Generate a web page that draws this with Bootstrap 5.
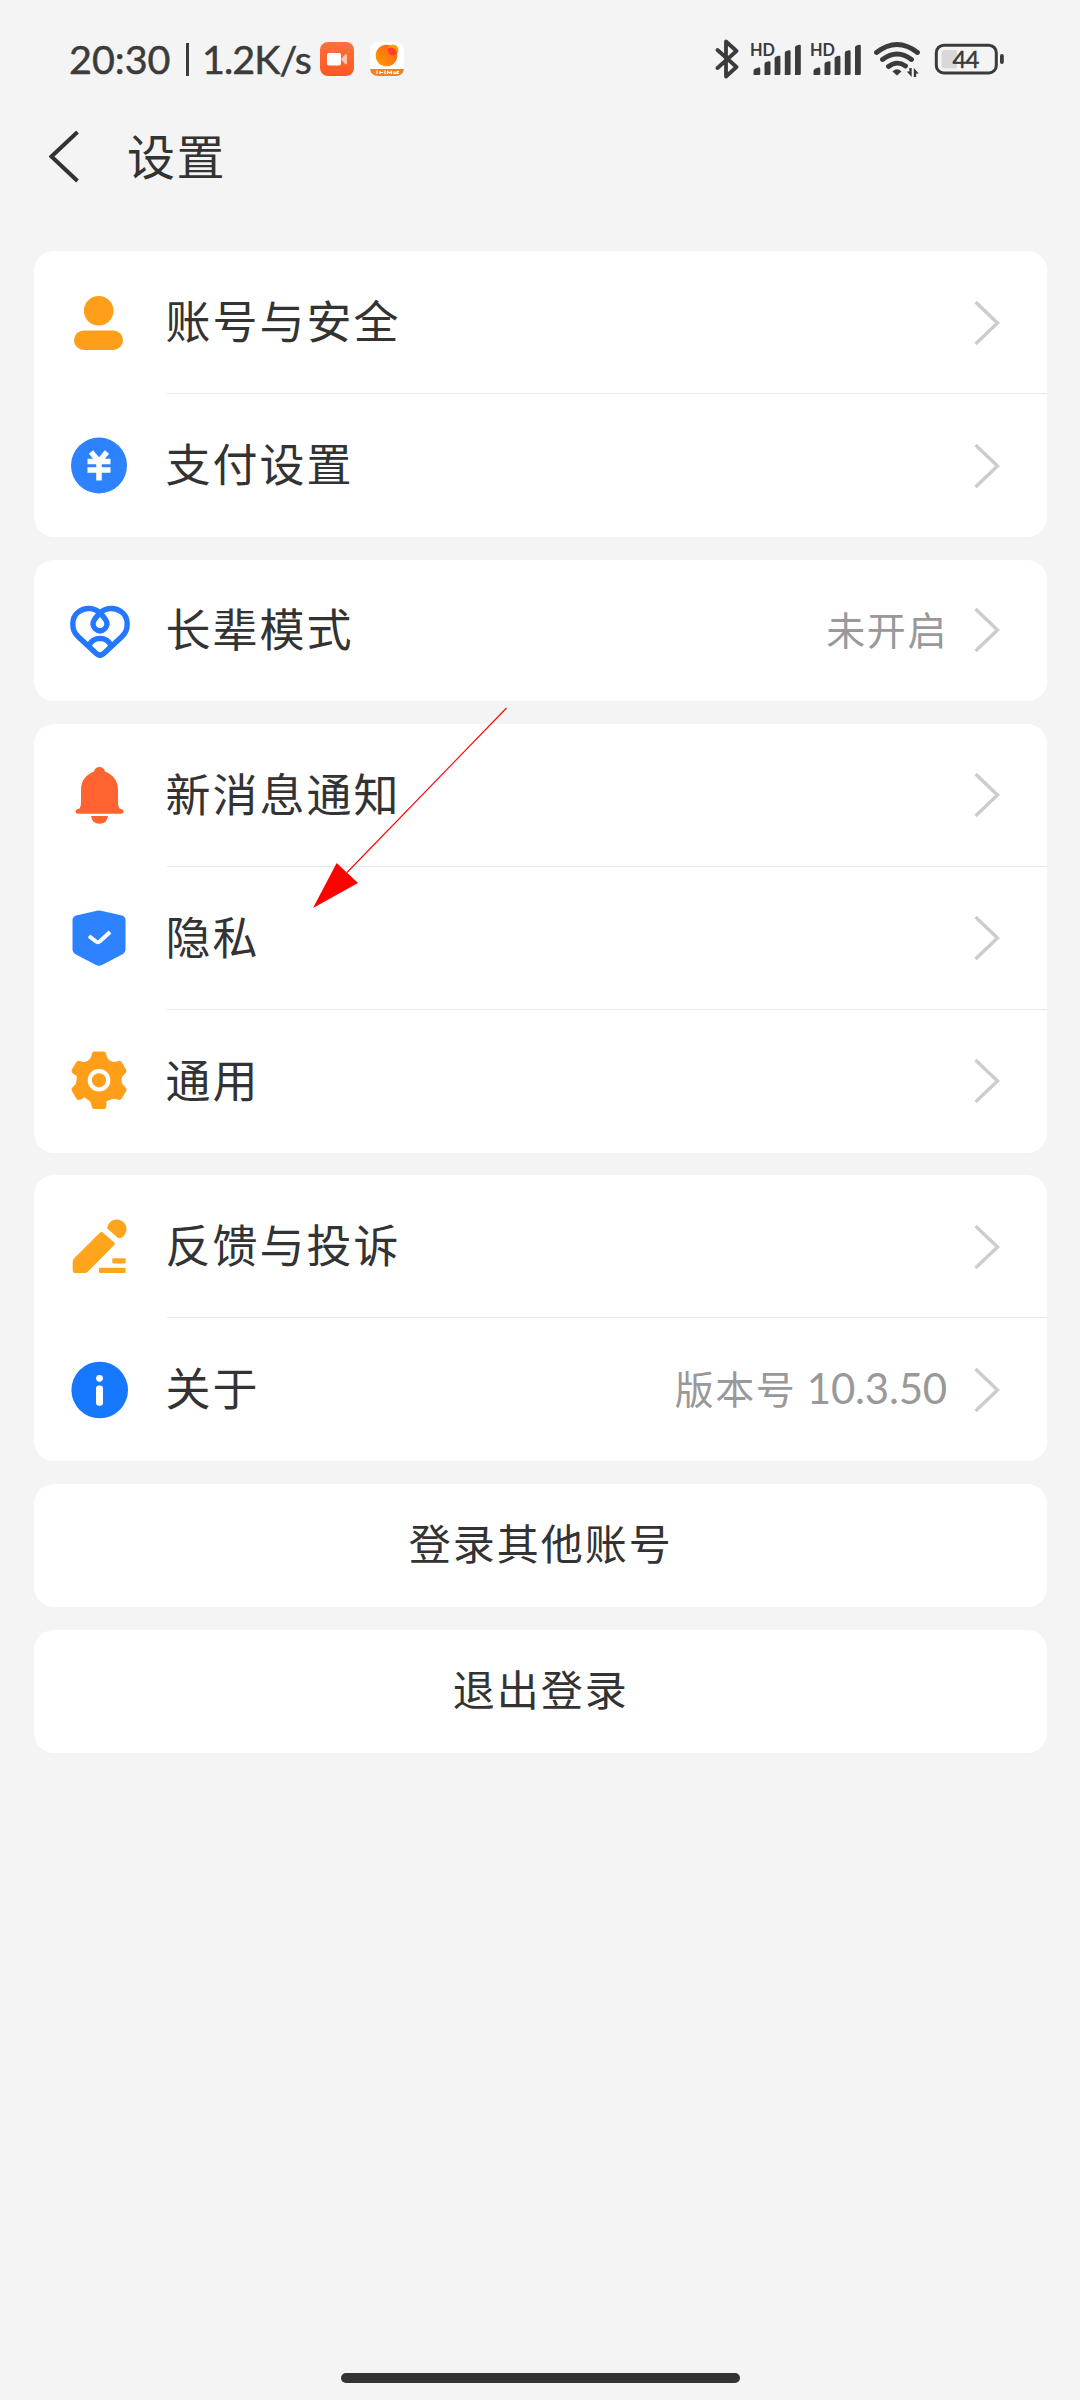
<!DOCTYPE html>
<html lang="zh-CN">
<head>
<meta charset="utf-8">
<meta name="viewport" content="width=device-width, initial-scale=1">
<title>设置</title>
<link href="https://cdn.jsdelivr.net/npm/bootstrap@5.3.0/dist/css/bootstrap.min.css" rel="stylesheet">
<style>
  body { background: #f4f4f4; color: #333; font-family: "Noto Sans CJK SC", sans-serif; }
  .screen { width: 1080px; height: 2400px; overflow: hidden; }
  .status { height: 118px; padding: 0 76px 0 69px; color: #3b3b3b; }
  .latin { font-family: Lato, sans-serif; }
  .status-text { font-size: 39.5px; line-height: 1; font-weight: 400; -webkit-text-stroke: .5px #3b3b3b; white-space: nowrap; }
  .clock { width: 101px; }
  .speed { width: 111px; letter-spacing: -1px; }
  .bar-sep { margin: 0 13px 0 15.5px; }
  .title-bar { height: 78px; padding-left: 49px; }
  .title-text { font-size: 48px; letter-spacing: 1.5px; line-height: 78px; margin-left: 48px; padding-bottom: 6px; }
  .groups { padding: 55px 33px 0 33.5px; gap: 22.6px; }
  .group { border: 0; border-radius: 20px; background: #fff; }
  .item { height: 143px; padding: 0 47px 0 35.5px; }
  .solo .item { height: 141.4px; }
  .item-icon { width: 60px; height: 60px; flex: none; }
  .item-label { font-size: 45px; letter-spacing: 2px; line-height: 60px; margin-left: 36.5px; padding-bottom: 5px; }
  .item-value { font-size: 39px; letter-spacing: 1.6px; line-height: 50px; color: #999; padding-bottom: 4px; }
  .item-value .latin { font-size: 42px; letter-spacing: -.2px; margin-right: 1px; }
  .chev { margin-left: 29px; flex: none; }
  .item-value + .chev { margin-left: 26px; }
  .divider { height: 1px; margin: -1px 0 0 133px; background: #e9e9e9; }
  .action { height: 123.4px; border: 0; border-radius: 20px; background: #fff; color: #333; font-size: 42px; letter-spacing: 2px; padding: 0 0 7px 1px; }
  .pointer { left: 300px; top: 700px; pointer-events: none; }
  .home-bar { width: 399px; height: 10px; border-radius: 5px; background: #333; margin-bottom: 17px; }
</style>
</head>
<body>
<div class="screen position-relative d-flex flex-column">

  <header class="status d-flex align-items-center justify-content-between">
    <div class="d-flex align-items-center">
      <span class="status-text clock latin">20:30</span>
      <svg class="bar-sep" width="3.6" height="33"><rect width="3.6" height="33" fill="#3b3b3b"/></svg>
      <span class="status-text speed latin">1.2K/s</span>
      <svg width="34" height="34" viewBox="0 0 34 34" style="margin-left:7px">
        <defs><linearGradient id="rec" x1="0" y1="0" x2="0" y2="1"><stop offset="0" stop-color="#ff713c"/><stop offset="1" stop-color="#ff5722"/></linearGradient></defs>
        <rect width="34" height="34" rx="8" fill="url(#rec)"/>
        <rect x="7" y="11" width="14" height="12.5" rx="2" fill="#fff"/>
        <path d="M21 17.2 25 12.5q2-1 2 1v7.500q0 2-2 1z" fill="#ffc8b2"/>
      </svg>
      <svg width="36" height="34" viewBox="0 0 36 34" style="margin-left:15px">
        <defs><linearGradient id="sun" x1="1" y1="0" x2="0" y2="1"><stop offset="0" stop-color="#ff5c1c"/><stop offset="1" stop-color="#ff9c00"/></linearGradient></defs>
        <rect x="1" width="34" height="34" rx="8" fill="#fff"/>
        <circle cx="17.500" cy="13.500" r="10.800" fill="url(#sun)"/>
        <circle cx="24" cy="8" r="5.500" fill="#ff9d0a"/>
        <path d="M18.600 7a5.500 5.500 0 0 1 9 5 10.800 10.800 0 0 1-3.500 1.400A5.500 5.500 0 0 1 18.600 7z" fill="#ff3d2e"/>
        <path d="M1 27h34q-1 7-8 7H9q-7 0-8-7z" fill="#f58220"/>
        <path d="M8 28.500v3.500M11 29v3M11 30.500h3M16 28.500v3.500M18.500 32v-2.500l2 1.500 2-1.500v2.500M25 29.500v2h2v-2M30 29.500h-1.500v2H30" fill="none" stroke="#fff" stroke-width="1.200"/>
      </svg>
    </div>
    <svg width="290" height="40" viewBox="714 39 290 40">
      <path d="M717.500 50 736.500 67 726 76.500V41.500L736.500 51 717.500 68" fill="none" stroke="#3b3b3b" stroke-width="3.800" stroke-linejoin="round" stroke-linecap="round"/>
      <g id="sig" fill="#3b3b3b">
        <text x="750" y="55.500" font-family="Lato, sans-serif" font-weight="700" font-size="16.500" textLength="25" lengthAdjust="spacingAndGlyphs">HD</text>
        <path d="M753.500 75v-4q0-2 2-2.600l3-1q1.800-.3 1.800 1.500v4.600q0 1.500-1.500 1.500zM764.500 75V64q0-1.600 1.600-2l2.800-.8q1.600-.3 1.600 1.300v11q0 1.500-1.500 1.500zM774.600 75V58.500q0-1.600 1.600-2l2.600-.8q1.600-.3 1.600 1.300v16.500q0 1.500-1.500 1.500zM784.800 75V53q0-1.600 1.600-2l2.600-.8q1.600-.3 1.600 1.300v22q0 1.500-1.500 1.500zM795 75V47.500q0-1.600 1.600-2l2.600-.8q1.600-.3 1.600 1.300v27.500q0 1.500-1.500 1.500z"/>
      </g>
      <use href="#sig" x="60"/>
      <g fill="none" stroke="#3b3b3b" stroke-width="4.800" stroke-linecap="round">
        <path d="M876.500 52.500Q897 36.500 917.500 52.500M882.500 59.500Q897 48.500 911.500 59.500M888.500 66.500Q897 60 905.500 66"/>
      </g>
      <path d="M897 75.500 892.500 71.500Q897 67 901.500 71.500z" fill="#3b3b3b"/>
      <path d="M909.300 68h2.400v9l-5-5.500h2.600zM913.800 77v-9l5 5.500h-2.600v3.500z" fill="#3b3b3b"/>
      <rect x="936.300" y="45.200" width="60" height="27.800" rx="7.500" fill="none" stroke="#3b3b3b" stroke-width="3"/>
      <path d="M957 50v18.500h-12q-3.500 0-3.500-3.500V53.500q0-3.500 3.500-3.500z" fill="#d8d8d8"/>
      <text x="952.500" y="67.800" font-family="Lato, sans-serif" font-weight="400" stroke="#3b3b3b" stroke-width=".5" font-size="24" textLength="27" fill="#3b3b3b">44</text>
      <rect x="1000" y="54" width="3.800" height="10" rx="1.900" fill="#3b3b3b"/>
    </svg>
  </header>

  <nav class="title-bar d-flex align-items-center">
    <svg width="30" height="52" viewBox="0 0 30 52"><path d="M28.500 1 2.500 25.500 28.500 50" fill="none" stroke="#333" stroke-width="4"/></svg>
    <h1 class="title-text fw-normal mb-0">设置</h1>
  </nav>

  <svg class="d-none"><defs><symbol id="chev" viewBox="0 0 26 44"><path d="M1.500 1 23.500 22 1.500 43" fill="none" stroke="#ccc" stroke-width="3.400"/></symbol></defs></svg>

  <main class="groups d-flex flex-column">
    <section class="card group">
      <div class="item d-flex align-items-center">
        <svg class="item-icon" viewBox="0 0 60 60" fill="#ff9f19"><circle cx="29.700" cy="17.800" r="14.800"/><rect x="5" y="37.500" width="49" height="19.400" rx="9.700"/></svg>
        <span class="item-label me-auto">账号与安全</span>
        <svg class="chev" width="26" height="44"><use href="#chev"/></svg>
      </div>
      <div class="divider"></div>
      <div class="item d-flex align-items-center">
        <svg class="item-icon" viewBox="0 0 60 60"><circle cx="30" cy="29.500" r="28" fill="#2c82ff"/><path d="M22 16 30 25.500 38 16M18.500 25.500h23M18.500 34h23M30 24.500v20" fill="none" stroke="#fff" stroke-width="5.500"/></svg>
        <span class="item-label me-auto">支付设置</span>
        <svg class="chev" width="26" height="44"><use href="#chev"/></svg>
      </div>
    </section>

    <section class="card group solo">
      <div class="item d-flex align-items-center">
        <svg class="item-icon overflow-visible" viewBox="0 0 60 60" fill="none" stroke="#2378ff" stroke-width="5.400" stroke-linecap="round" stroke-linejoin="round">
          <path d="M31 55.200Q29 55.200 27 53.300L9 36.500C1.500 29 2.500 17 9.500 11.800 16 7 25 7.500 31 13 35.500 17.500 38 20.500 38 23.700A7 7 0 0 1 31 30.700"/>
          <path d="M31 55.200Q33 55.200 35 53.300L53 36.500C60.500 29 59.500 17 52.500 11.800 46 7 37 7.500 31 13 26.500 17.500 24 20.500 24 23.700A7 7 0 0 0 31 30.700"/>
          <path d="M20 46C23 36 39 36 42 46"/>
        </svg>
        <span class="item-label me-auto">长辈模式</span>
        <span class="item-value">未开启</span>
        <svg class="chev" width="26" height="44"><use href="#chev"/></svg>
      </div>
    </section>

    <section class="card group">
      <div class="item d-flex align-items-center">
        <svg class="item-icon" viewBox="0 0 60 60" fill="#ff6430"><path d="M25 6.500a5.600 5.600 0 0 1 11 0C44 9.500 49 16 49 24.500V38q0 3 1.500 5.500 4 .5 4 3 0 2.200-2.500 2.200H9q-2.500 0-2.500-2.200 0-2.500 4-3Q12 41 12 38V24.500C12 16 17 9.500 25 6.500zM22 51h17q-.8 7.700-8.500 7.700T22 51z"/></svg>
        <span class="item-label me-auto">新消息通知</span>
        <svg class="chev" width="26" height="44"><use href="#chev"/></svg>
      </div>
      <div class="divider"></div>
      <div class="item d-flex align-items-center">
        <svg class="item-icon" viewBox="0 0 60 60"><path d="M28 2.700q2-.5 4 0L53 7.400q3.500 1 3.500 4.500V41q0 3.500-3 5.200L33 56.900q-3 1.600-6 0L6.500 46.200q-3-1.700-3-5.200V11.900q0-3.500 3.500-4.500z" fill="#2c82ff"/><path d="M20 28 27 33.500Q29 35 31 33.300L41 24" fill="none" stroke="#fff" stroke-width="4"/></svg>
        <span class="item-label me-auto">隐私</span>
        <svg class="chev" width="26" height="44"><use href="#chev"/></svg>
      </div>
      <div class="divider"></div>
      <div class="item d-flex align-items-center">
        <svg class="item-icon" viewBox="0 0 60 60">
          <g fill="#ff9f19"><circle cx="30" cy="29.300" r="22.500"/>
            <path id="tooth" d="M19 10Q22 8 22.700 3.700 23 .5 26 .5h8q3 0 3.300 3.200Q38 8 41 10L36 29.300V48.600Q38 50.600 37.300 54.900 37 58.100 34 58.100h-8q-3 0-3.300-3.200Q22 50.600 19 48.600z"/>
            <use href="#tooth" transform="rotate(60 30 29.300)"/><use href="#tooth" transform="rotate(120 30 29.300)"/></g>
          <circle cx="30" cy="29.300" r="9.200" fill="none" stroke="#fff" stroke-width="4.200"/>
        </svg>
        <span class="item-label me-auto">通用</span>
        <svg class="chev" width="26" height="44"><use href="#chev"/></svg>
      </div>
    </section>

    <section class="card group">
      <div class="item d-flex align-items-center">
        <svg class="item-icon" viewBox="0 0 60 60" fill="#ffa51d"><path d="M30.500 16q1.800-1.800 3.600-.2L45 25.300q1.500 1.500 0 3L19 54.500Q17.500 56 15.500 56H6q-2.300 0-2.300-2.300V44.500Q3.700 42.700 5 41.400zM38.300 10.200A9.700 9.700 0 1 1 51 21.300Q49.500 21.500 48.500 20.500L38.700 12Q37.800 11.200 38.300 10.200z"/><rect x="43.300" y="41.300" width="13.300" height="5.200" rx="1"/><rect x="30" y="50.700" width="26.600" height="5.400" rx="1"/></svg>
        <span class="item-label me-auto">反馈与投诉</span>
        <svg class="chev" width="26" height="44"><use href="#chev"/></svg>
      </div>
      <div class="divider"></div>
      <div class="item d-flex align-items-center">
        <svg class="item-icon" viewBox="0 0 60 60"><circle cx="30.700" cy="30" r="28.300" fill="#1677ff"/><circle cx="30.500" cy="18.300" r="3.400" fill="#fff"/><rect x="27" y="25.500" width="7" height="20.300" rx="3" fill="#fff"/></svg>
        <span class="item-label me-auto">关于</span>
        <span class="item-value">版本号 <span class="latin">10.3.50</span></span>
        <svg class="chev" width="26" height="44"><use href="#chev"/></svg>
      </div>
    </section>

    <button class="action btn" type="button">登录其他账号</button>
    <button class="action btn" type="button">退出登录</button>
  </main>

  <svg class="pointer position-absolute" width="220" height="220" viewBox="300 700 220 220"><path d="M506.500 708 347 872.500" stroke="#f00" stroke-width="1.100"/><path d="M313 908 336.700 863 358 883z" fill="#f00"/></svg>

  <div class="home-bar mt-auto mx-auto"></div>
</div>
<script src="https://cdn.jsdelivr.net/npm/bootstrap@5.3.0/dist/js/bootstrap.bundle.min.js"></script>
</body>
</html>
